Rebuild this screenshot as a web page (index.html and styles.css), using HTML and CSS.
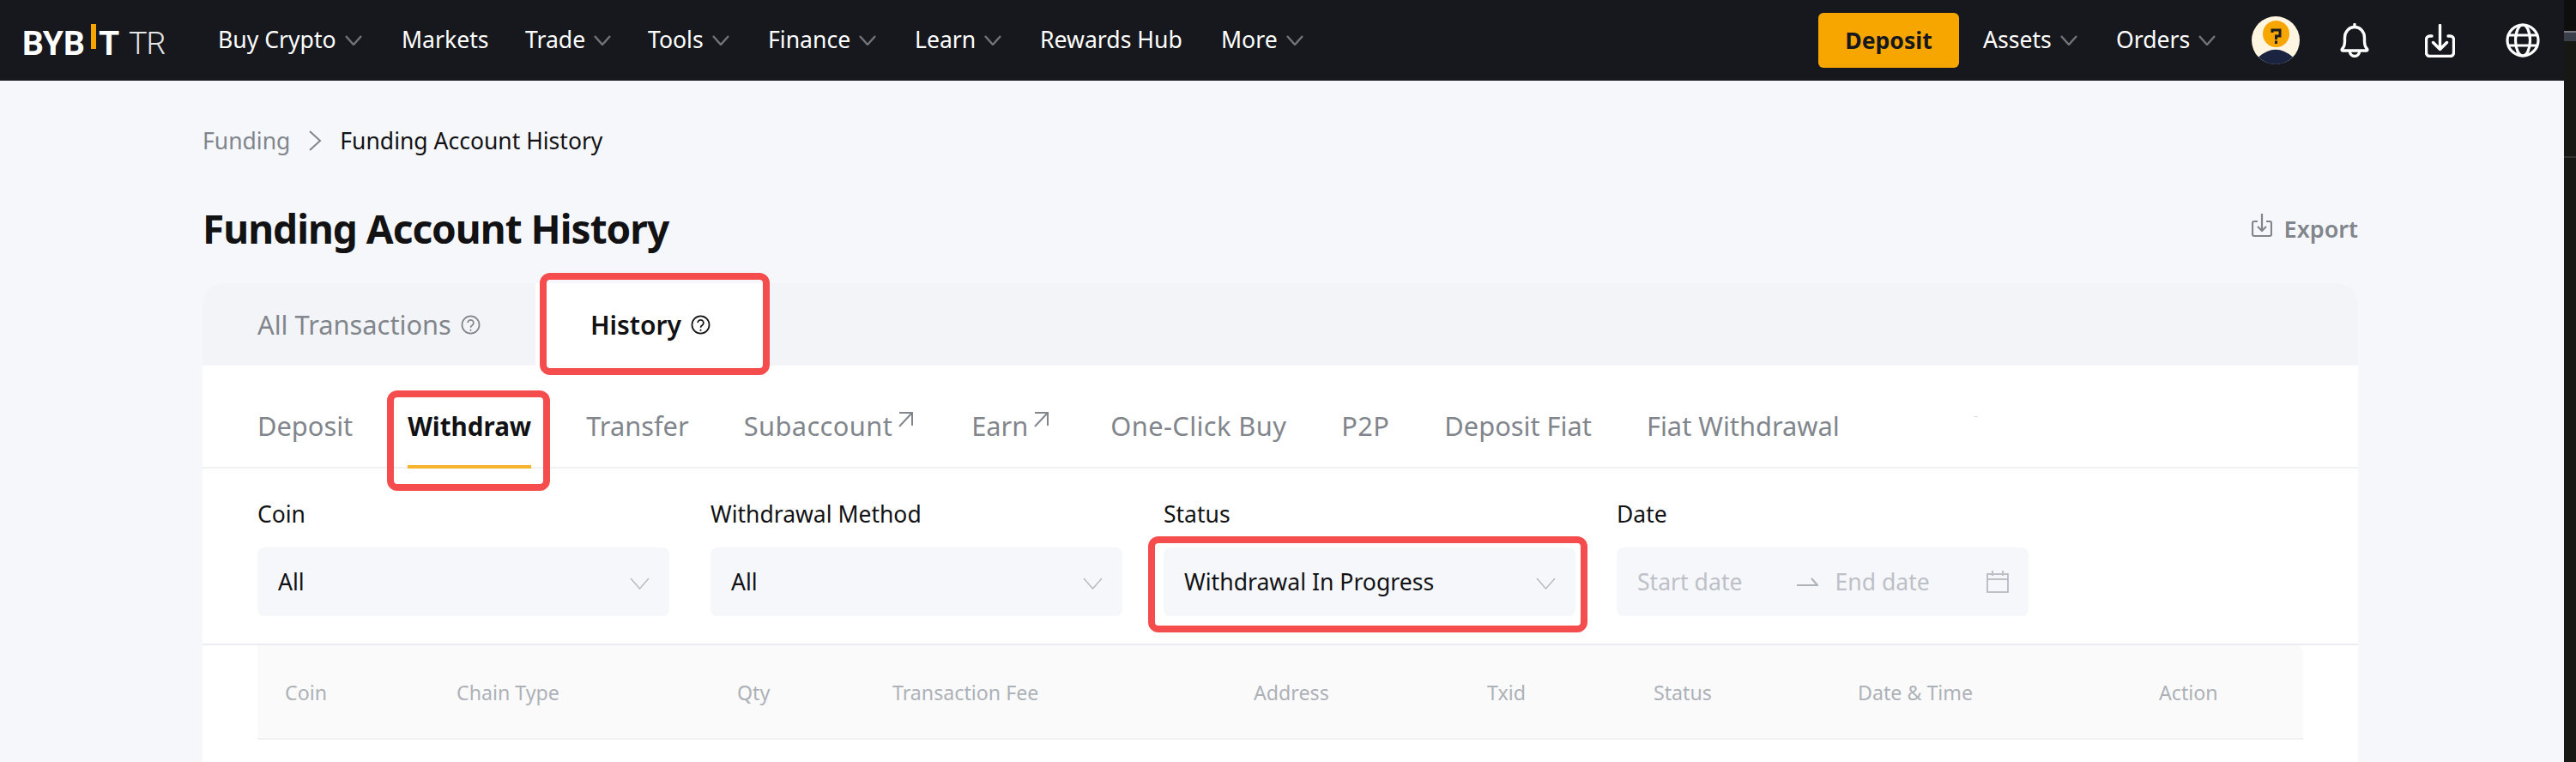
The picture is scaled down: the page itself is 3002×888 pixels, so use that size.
FILE: index.html
```html
<!DOCTYPE html>
<html lang="en">
<head>
    <meta charset="UTF-8">
    <meta name="viewport" content="width=device-width, initial-scale=1.0">
    <title>Funding Account History</title>
    <link rel="stylesheet" href="styles.css">
</head>
<body>
    <div class="page">
        <!-- Top Navigation -->
        <header class="topbar">
            <a class="logo"><span class="logo-main">BYB<span class="logo-bar"></span>T</span><span class="logo-tr">TR</span></a>
            <nav class="nav">
                <a class="nav-item" style="width: 214px">Buy Crypto <svg class="chev" viewBox="0 0 20 12"><path d="M1 1l9 10 9-10"/></svg></a>
                <a class="nav-item" style="width: 144px">Markets</a>
                <a class="nav-item" style="width: 143px">Trade <svg class="chev" viewBox="0 0 20 12"><path d="M1 1l9 10 9-10"/></svg></a>
                <a class="nav-item" style="width: 140px">Tools <svg class="chev" viewBox="0 0 20 12"><path d="M1 1l9 10 9-10"/></svg></a>
                <a class="nav-item" style="width: 171px">Finance <svg class="chev" viewBox="0 0 20 12"><path d="M1 1l9 10 9-10"/></svg></a>
                <a class="nav-item" style="width: 146px">Learn <svg class="chev" viewBox="0 0 20 12"><path d="M1 1l9 10 9-10"/></svg></a>
                <a class="nav-item" style="width: 211px">Rewards Hub</a>
                <a class="nav-item">More <svg class="chev" viewBox="0 0 20 12"><path d="M1 1l9 10 9-10"/></svg></a>
            </nav>
            <div class="nav-right">
                <button class="deposit-btn">Deposit</button>
                <a class="nav-item assets">Assets <svg class="chev" viewBox="0 0 20 12"><path d="M1 1l9 10 9-10"/></svg></a>
                <a class="nav-item orders">Orders <svg class="chev" viewBox="0 0 20 12"><path d="M1 1l9 10 9-10"/></svg></a>
                <svg class="avatar" viewBox="0 0 56 56">
                    <circle cx="28" cy="28" r="28" fill="#fff5e0"/>
                    <circle cx="28.500" cy="20.500" r="15.500" fill="#f7a600"/>
                    <path d="M8 47.500Q28 30 48 47.500A28 28 0 0 1 8 47.500z" fill="#1a2340"/>
                    <path d="M24 19v-3h9v7h-4.500v4M28.500 28.500v3.500" fill="none" stroke="#1c1c1c" stroke-width="3"/>
                </svg>
                <svg class="bell" viewBox="0 0 34 40" fill="none" stroke="#fff" stroke-width="3.400" stroke-linecap="round" stroke-linejoin="round">
                    <path d="M17 1.500v3M2.500 30c2-2 3-5 3-9v-4c0-7 5-12.500 11.500-12.500S28.500 10 28.500 17v4c0 4 1 7 3 9c.8 1 .2 2-1 2H3.500c-1.200 0-1.800-1-1-2z"/>
                    <path d="M11.500 33a5.500 5.500 0 0 0 11 0"/>
                </svg>
                <svg class="tray" viewBox="0 0 35 39" fill="none" stroke="#fff" stroke-width="3.400" stroke-linecap="round" stroke-linejoin="round">
                    <path d="M8 14H5.500a4 4 0 0 0-4 4v15.500a4 4 0 0 0 4 4h24a4 4 0 0 0 4-4V18a4 4 0 0 0-4-4H27"/>
                    <path d="M17.500 1.500V29M9.500 21.500l8 8 8-8"/>
                </svg>
                <svg class="globe" viewBox="0 0 40 40" fill="none" stroke="#fff" stroke-width="3.200">
                    <circle cx="20" cy="20" r="18"/>
                    <ellipse cx="20" cy="20" rx="8.500" ry="18"/>
                    <path d="M3 14h34M3 26h34"/>
                </svg>
            </div>
        </header>

        <main class="content">
            <div class="breadcrumb">
                <span class="crumb-link">Funding</span>
                <svg class="crumb-sep" viewBox="0 0 16 24"><path d="M2 1l12 11L2 23"/></svg>
                <span>Funding Account History</span>
            </div>

            <div class="title-row">
                <h1>Funding Account History</h1>
                <a class="export">
                    <svg viewBox="0 0 24 28" fill="none" stroke="#81858c" stroke-width="2.200"><path d="M7 9H3c-1 0-2 1-2 2v13c0 1 1 2 2 2h18c1 0 2-1 2-2V11c0-1-1-2-2-2h-4M12 0v20M7 15l5 5 5-5"/></svg>
                    Export
                </a>
            </div>

            <section class="card">
                <div class="main-tabs">
                    <div class="main-tab">All Transactions <svg class="help" viewBox="0 0 24 24"><circle cx="12" cy="12" r="10.500"/><path d="M8.500 9.500a3.500 3.500 0 1 1 5.500 3c-1.300 .8-2 1.300-2 3M12 17.500v2"/></svg></div>
                    <div class="main-tab active">History <svg class="help" viewBox="0 0 24 24"><circle cx="12" cy="12" r="10.500"/><path d="M8.500 9.500a3.500 3.500 0 1 1 5.500 3c-1.300 .8-2 1.300-2 3M12 17.500v2"/></svg></div>
                </div>

                <div class="sub-tabs">
                    <a class="sub-tab">Deposit</a>
                    <a class="sub-tab active">Withdraw</a>
                    <a class="sub-tab">Transfer</a>
                    <a class="sub-tab wide">Subaccount<svg class="ext" viewBox="0 0 18 18"><path d="M2 1h15v15M17 1L2 17"/></svg></a>
                    <a class="sub-tab earn">Earn<svg class="ext" viewBox="0 0 18 18"><path d="M2 1h15v15M17 1L2 17"/></svg></a>
                    <a class="sub-tab wide">One-Click Buy</a>
                    <a class="sub-tab wide">P2P</a>
                    <a class="sub-tab">Deposit Fiat</a>
                    <a class="sub-tab">Fiat Withdrawal</a>
                </div>

                <div class="filters">
                    <div class="filter">
                        <label>Coin</label>
                        <div class="select">All <svg class="chev-light" viewBox="0 0 23 14"><path d="M1 1l10.500 12L22 1"/></svg></div>
                    </div>
                    <div class="filter">
                        <label>Withdrawal Method</label>
                        <div class="select">All <svg class="chev-light" viewBox="0 0 23 14"><path d="M1 1l10.500 12L22 1"/></svg></div>
                    </div>
                    <div class="filter">
                        <label>Status</label>
                        <div class="select">Withdrawal In Progress <svg class="chev-light" viewBox="0 0 23 14"><path d="M1 1l10.500 12L22 1"/></svg></div>
                    </div>
                    <div class="filter">
                        <label>Date</label>
                        <div class="select date">
                            <span>Start date</span>
                            <svg class="date-arrow" viewBox="0 0 25 12"><path d="M0 10h24L17 2"/></svg>
                            <span>End date</span>
                            <svg class="calendar" viewBox="0 0 26 26"><path d="M1 4h24v21H1zM1 10h24M7 0v6M19 0v6"/></svg>
                        </div>
                    </div>
                </div>

                <div class="table-wrap">
                    <div class="table-head">
                        <span>Coin</span>
                        <span>Chain Type</span>
                        <span>Qty</span>
                        <span>Transaction Fee</span>
                        <span>Address</span>
                        <span>Txid</span>
                        <span>Status</span>
                        <span>Date &amp; Time</span>
                        <span>Action</span>
                    </div>
                </div>

                <!-- Annotations -->
                <div class="mark mark-history"></div>
                <div class="mark mark-withdraw"></div>
                <div class="mark mark-status"></div>
                <div class="speck"></div>
            </section>
        </main>
    </div>

    <!-- Edge of the neighbouring window -->
    <div class="strip">
        <div class="strip-top"></div>
        <div class="strip-tab"></div>
        <div class="strip-line"></div>
    </div>
</body>
</html>
```
FILE: styles.css
```css
body {
    display: flex;
    font-family: "Noto Sans", Arial, sans-serif;
    margin: 0;
    padding: 0;
    height: 888px;
    overflow: hidden;
    background-color: #171714;
}
.page {
    width: 2988px;
    height: 888px;
    overflow: hidden;
    background-color: #f5f7fb;
}
.strip {
    flex: 1;
}
.strip-top {
    height: 36px;
    background-color: #0e0e0e;
}
.strip-tab {
    height: 10px;
    background-color: #3a3f4c;
    border-top: 2px solid #7a7a80;
}
.strip-line {
    height: 2px;
    margin-top: 134px;
    background-color: #333;
}
.topbar {
    display: flex;
    align-items: center;
    height: 94px;
    padding-left: 26px;
    background-color: #17181e;
    color: #fff;
}
.logo {
    display: flex;
    align-items: center;
    width: 228px;
    height: 94px;
    padding-top: 8px;
    box-sizing: border-box;
}
.logo-main {
    display: flex;
    align-items: center;
    font-family: Roboto, Arial, sans-serif;
    font-size: 39px;
    font-weight: bold;
}
.logo-bar {
    width: 6px;
    height: 29px;
    margin: 0 3px 17px 7px;
    background-color: #f7a600;
}
.logo-tr {
    margin-left: 11px;
    font-family: Roboto, Arial, sans-serif;
    font-size: 36px;
    font-weight: 300;
    letter-spacing: -1px;
    color: #e6e6e6;
}
.nav {
    display: flex;
}
.nav-item {
    display: flex;
    align-items: center;
    gap: 10px;
    padding-bottom: 3px;
    font-size: 26.600px;
    white-space: nowrap;
}
.chev {
    width: 20px;
    height: 12px;
    margin-top: 3px;
    fill: none;
    stroke: #71757a;
    stroke-width: 2.400;
}
.nav-right {
    display: flex;
    align-items: center;
    margin-left: auto;
    height: 94px;
}
.deposit-btn {
    width: 164px;
    height: 64px;
    margin-right: 28px;
    background-color: #f7a600;
    color: #17181e;
    border: none;
    border-radius: 6px;
    font-family: inherit;
    font-size: 26.600px;
    font-weight: bold;
}
.assets {
    width: 155px;
}
.orders {
    width: 158px;
}
.avatar {
    width: 56px;
    height: 56px;
    margin-right: 47px;
}
.bell {
    width: 34px;
    height: 40px;
    margin-right: 65px;
}
.tray {
    width: 35px;
    height: 39px;
    margin-right: 59px;
}
.globe {
    width: 40px;
    height: 40px;
    margin-right: 28px;
}
.content {
    position: relative;
    padding: 0 240px 0 236px;
}
.breadcrumb {
    display: flex;
    align-items: center;
    height: 36px;
    margin-top: 52px;
    font-size: 26.500px;
    color: #121214;
}
.crumb-link {
    color: #81858c;
}
.crumb-sep {
    width: 16px;
    height: 24px;
    margin: 0 21px;
    fill: none;
    stroke: #81858c;
    stroke-width: 2;
}
.title-row {
    display: flex;
    align-items: center;
    justify-content: space-between;
    height: 60px;
    margin-top: 54px;
}
h1 {
    margin: 0;
    font-size: 46px;
    font-weight: bold;
    letter-spacing: -1px;
    color: #121214;
}
.export {
    display: flex;
    align-items: center;
    gap: 14px;
    font-size: 27px;
    font-weight: 600;
    color: #81858c;
}
.export svg {
    width: 24px;
    height: 28px;
    margin-top: -6px;
}
.card {
    position: relative;
    margin-top: 34px;
    height: 562px;
    background-color: #fff;
    border-radius: 24px 24px 0 0;
}
.main-tabs {
    display: flex;
    height: 96px;
    background-color: #f3f4f7;
    border-radius: 24px 24px 0 0;
}
.main-tab {
    display: flex;
    align-items: center;
    gap: 11px;
    padding: 0 64px;
    font-size: 30.800px;
    color: #81858c;
}
.main-tab.active {
    background-color: #fff;
    color: #121214;
    font-size: 30px;
    font-weight: 600;
}
.help {
    width: 23px;
    height: 23px;
    fill: none;
    stroke: currentColor;
    stroke-width: 1.800;
}
.sub-tabs {
    display: flex;
    gap: 64px;
    height: 120px;
    padding: 0 64px;
    border-bottom: 2px solid #f0f1f3;
    box-sizing: border-box;
}
.sub-tab {
    display: flex;
    align-items: center;
    height: 120px;
    padding-top: 20px;
    font-size: 30.800px;
    color: #81858c;
    box-sizing: border-box;
}
.sub-tab.wide {
    letter-spacing: 0.4px;
}
.sub-tab.earn {
    margin-right: 4px;
}
.sub-tab.active {
    color: #121214;
    font-size: 29.600px;
    font-weight: bold;
    padding-top: 24px;
    border-bottom: 4px solid #f7b32b;
}
.ext {
    width: 18px;
    height: 18px;
    margin: -14px 4px 0 6px;
    fill: none;
    stroke: currentColor;
    stroke-width: 2;
}
.filters {
    display: flex;
    gap: 48px;
    height: 206px;
    padding: 0 64px;
    border-bottom: 2px solid #ebecf1;
    box-sizing: border-box;
}
.filter {
    width: 480px;
}
.filter label {
    display: block;
    margin-top: 35px;
    height: 36px;
    line-height: 36px;
    font-size: 26.500px;
    color: #121214;
}
.select {
    display: flex;
    align-items: center;
    justify-content: space-between;
    box-sizing: border-box;
    height: 80px;
    margin-top: 21px;
    padding: 0 23px 0 24px;
    background-color: #f5f7fb;
    border-radius: 8px;
    font-size: 26.600px;
    color: #121214;
}
.chev-light {
    width: 23px;
    height: 14px;
    margin-top: 3px;
    fill: none;
    stroke: #b7bbc1;
    stroke-width: 1.500;
}
.select.date {
    justify-content: flex-start;
    color: #bdc0c6;
}
.date-arrow {
    width: 25px;
    height: 12px;
    margin: 0 20px 0 63px;
    fill: none;
    stroke: #adb1b8;
    stroke-width: 2;
}
.calendar {
    width: 26px;
    height: 26px;
    margin-left: auto;
    fill: none;
    stroke: #bdc0c6;
    stroke-width: 2;
}
.table-wrap {
    padding: 0 64px;
}
.table-head {
    display: grid;
    grid-template-columns: 200px 327px 181px 421px 272px 194px 238px 351px 1fr;
    align-items: center;
    height: 110px;
    padding: 2px 0 0 32px;
    background-color: #fafafa;
    border-bottom: 2px solid #f0f1f3;
    border-radius: 0 8px 0 0;
    box-sizing: border-box;
    font-size: 23.200px;
    color: #adb1b8;
}
.mark {
    position: absolute;
    border: 8px solid #f54d4d;
    border-radius: 12px;
    box-sizing: border-box;
}
.mark-history {
    left: 393px;
    top: -12px;
    width: 268px;
    height: 119px;
}
.mark-withdraw {
    left: 215px;
    top: 125px;
    width: 190px;
    height: 117px;
}
.mark-status {
    left: 1102px;
    top: 295px;
    width: 512px;
    height: 112px;
}
.speck {
    position: absolute;
    left: 2064px;
    top: 155px;
    width: 5px;
    height: 1px;
    background-color: #e0e0e0;
}
```
